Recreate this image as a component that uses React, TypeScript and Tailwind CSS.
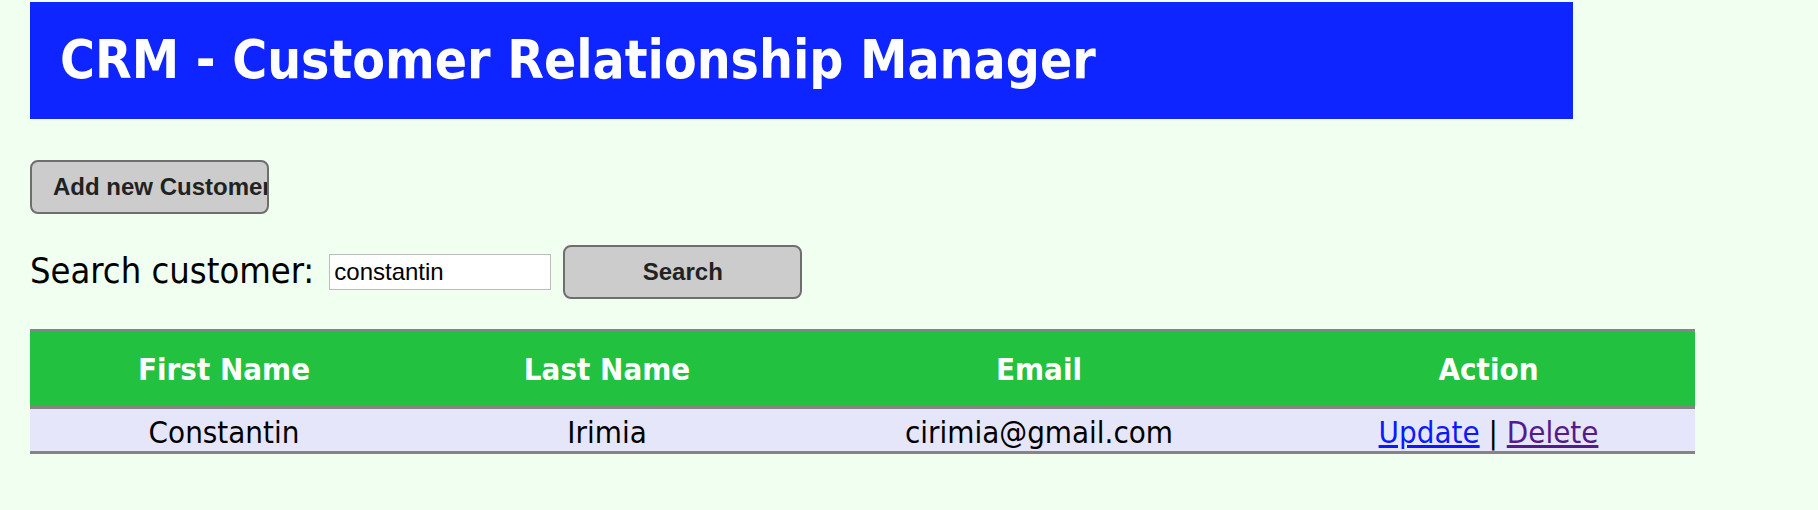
const PAGE_FONT = "font-['DejaVu_Sans_Condensed','DejaVu_Sans',sans-serif]";
const BTN =
  "h-[54px] rounded-[8px] border-2 border-[#6e6e6e] bg-[#cccccc] font-['Liberation_Sans',Arial,sans-serif] text-[24px] font-bold text-[#222]";

const COLS = 'grid grid-cols-[388px_378px_486px_413px]';

const customers = [
  { firstName: 'Constantin', lastName: 'Irimia', email: 'cirimia@gmail.com' },
];

export default function App() {
  return (
    <div className={`min-h-screen bg-[#f0fff0] pt-[2px] pl-[30px] ${PAGE_FONT}`}>
      <div className="flex h-[117px] w-[1543px] items-center bg-[#0f25ff] pl-[30px] pb-[2px]">
        <h1 className="text-[53px] font-bold leading-none text-white">
          CRM - Customer Relationship Manager
        </h1>
      </div>

      <button
        type="button"
        className={`${BTN} mt-[41px] block h-[52px] w-[239px] overflow-hidden whitespace-nowrap pl-[21px] text-left`}
      >
        Add new Customer
      </button>

      <div className="mt-[31px] flex items-center">
        <span className="pb-[3px] text-[36px] leading-none text-black">Search customer:</span>
        <input
          type="text"
          defaultValue="constantin"
          className="ml-[15px] h-[36px] w-[222px] border border-[#bdbdbd] bg-white pl-[4px] font-['Liberation_Sans',Arial,sans-serif] text-[24px] text-black outline-none"
        />
        <button type="button" className={`${BTN} ml-[12px] w-[239px]`}>
          Search
        </button>
      </div>

      <div className="mt-[30px] w-[1665px]">
        <div className={`${COLS} h-[80px] border-y-[3px] border-[#858585] bg-[#22c13f] text-[31px] font-bold text-white`}>
          <div className="flex items-center justify-center">First Name</div>
          <div className="flex items-center justify-center">Last Name</div>
          <div className="flex items-center justify-center">Email</div>
          <div className="flex items-center justify-center">Action</div>
        </div>
        {customers.map((c) => (
          <div
            key={c.email}
            className={`${COLS} h-[45px] border-b-[3px] border-[#858585] bg-[#e6e6fa] text-[31px] text-black`}
          >
            <div className="flex items-center justify-center">{c.firstName}</div>
            <div className="flex items-center justify-center">{c.lastName}</div>
            <div className="flex items-center justify-center">{c.email}</div>
            <div className="flex items-center justify-center whitespace-pre">
              <a href="#" className="text-[#0b1bff] underline">
                Update
              </a>
              {' | '}
              <a href="#" className="text-[#551a8b] underline">
                Delete
              </a>
            </div>
          </div>
        ))}
      </div>
    </div>
  );
}
